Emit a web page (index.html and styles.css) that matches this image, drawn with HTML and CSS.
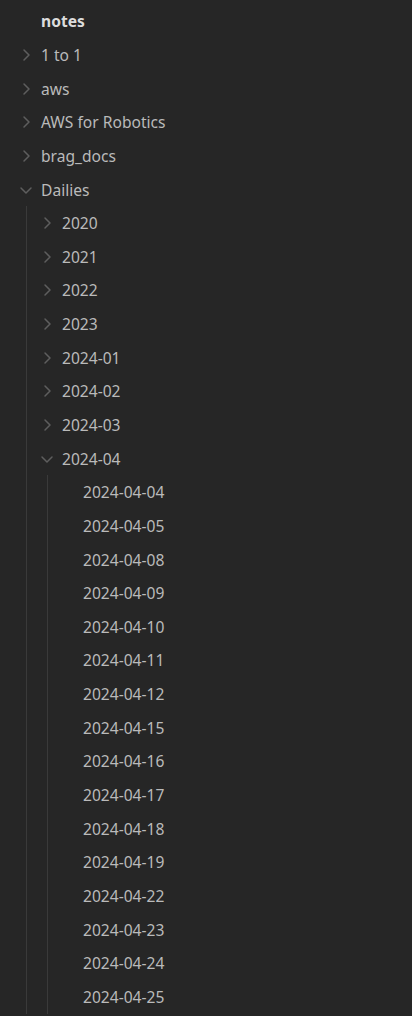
FILE: index.html
```html
<!DOCTYPE html>
<html>
<head>
<meta charset="utf-8">
<link rel="stylesheet" href="styles.css">
</head>
<body>
<div class="tree">
  <div class="row root"><span class="label">notes</span></div>
  <div class="row"><svg class="chev" viewBox="0 0 14 14"><path d="M5 2 L10 7 L5 12"/></svg><span class="label">1 to 1</span></div>
  <div class="row"><svg class="chev" viewBox="0 0 14 14"><path d="M5 2 L10 7 L5 12"/></svg><span class="label">aws</span></div>
  <div class="row"><svg class="chev" viewBox="0 0 14 14"><path d="M5 2 L10 7 L5 12"/></svg><span class="label">AWS for Robotics</span></div>
  <div class="row"><svg class="chev" viewBox="0 0 14 14"><path d="M5 2 L10 7 L5 12"/></svg><span class="label">brag_docs</span></div>
  <div class="row"><svg class="chev" viewBox="0 0 14 14"><path d="M2 5 L7 10 L12 5"/></svg><span class="label">Dailies</span></div>
  <div class="children">
    <div class="row"><svg class="chev" viewBox="0 0 14 14"><path d="M5 2 L10 7 L5 12"/></svg><span class="label">2020</span></div>
    <div class="row"><svg class="chev" viewBox="0 0 14 14"><path d="M5 2 L10 7 L5 12"/></svg><span class="label">2021</span></div>
    <div class="row"><svg class="chev" viewBox="0 0 14 14"><path d="M5 2 L10 7 L5 12"/></svg><span class="label">2022</span></div>
    <div class="row"><svg class="chev" viewBox="0 0 14 14"><path d="M5 2 L10 7 L5 12"/></svg><span class="label">2023</span></div>
    <div class="row"><svg class="chev" viewBox="0 0 14 14"><path d="M5 2 L10 7 L5 12"/></svg><span class="label">2024-01</span></div>
    <div class="row"><svg class="chev" viewBox="0 0 14 14"><path d="M5 2 L10 7 L5 12"/></svg><span class="label">2024-02</span></div>
    <div class="row"><svg class="chev" viewBox="0 0 14 14"><path d="M5 2 L10 7 L5 12"/></svg><span class="label">2024-03</span></div>
    <div class="row"><svg class="chev" viewBox="0 0 14 14"><path d="M2 5 L7 10 L12 5"/></svg><span class="label">2024-04</span></div>
    <div class="children">
      <div class="row leaf"><span class="label">2024-04-04</span></div>
      <div class="row leaf"><span class="label">2024-04-05</span></div>
      <div class="row leaf"><span class="label">2024-04-08</span></div>
      <div class="row leaf"><span class="label">2024-04-09</span></div>
      <div class="row leaf"><span class="label">2024-04-10</span></div>
      <div class="row leaf"><span class="label">2024-04-11</span></div>
      <div class="row leaf"><span class="label">2024-04-12</span></div>
      <div class="row leaf"><span class="label">2024-04-15</span></div>
      <div class="row leaf"><span class="label">2024-04-16</span></div>
      <div class="row leaf"><span class="label">2024-04-17</span></div>
      <div class="row leaf"><span class="label">2024-04-18</span></div>
      <div class="row leaf"><span class="label">2024-04-19</span></div>
      <div class="row leaf"><span class="label">2024-04-22</span></div>
      <div class="row leaf"><span class="label">2024-04-23</span></div>
      <div class="row leaf"><span class="label">2024-04-24</span></div>
      <div class="row leaf"><span class="label">2024-04-25</span></div>
    </div>
  </div>
</div>
</body>
</html>
```

FILE: styles.css
```css
html, body {
  margin: 0;
  padding: 0;
  background: #262626;
  height: 100%;
  overflow: hidden;
}
body {
  font-family: "Noto Sans", "Open Sans", sans-serif;
  font-size: 15.6px;
  color: #bababa;
}
.tree {
  padding-top: 4.5px;
}
.row {
  display: flex;
  align-items: center;
  height: 33.65px;
  padding-left: 19px;
  white-space: nowrap;
}
.chev {
  width: 14px;
  height: 14px;
  margin-right: 8px;
  flex: none;
  fill: none;
  stroke: #5e5e5e;
  stroke-width: 1.5;
  stroke-linecap: round;
  stroke-linejoin: round;
}
.root {
  padding-left: 41px;
}
.root .label {
  font-weight: 700;
  color: #dcdcdc;
}
.children {
  margin-left: 26px;
  border-left: 1px solid #3a3a3a;
}
.children .row {
  padding-left: 13px;
}
.children .children {
  margin-left: 20px;
}
.children .children .row.leaf {
  padding-left: 35px;
}
```
